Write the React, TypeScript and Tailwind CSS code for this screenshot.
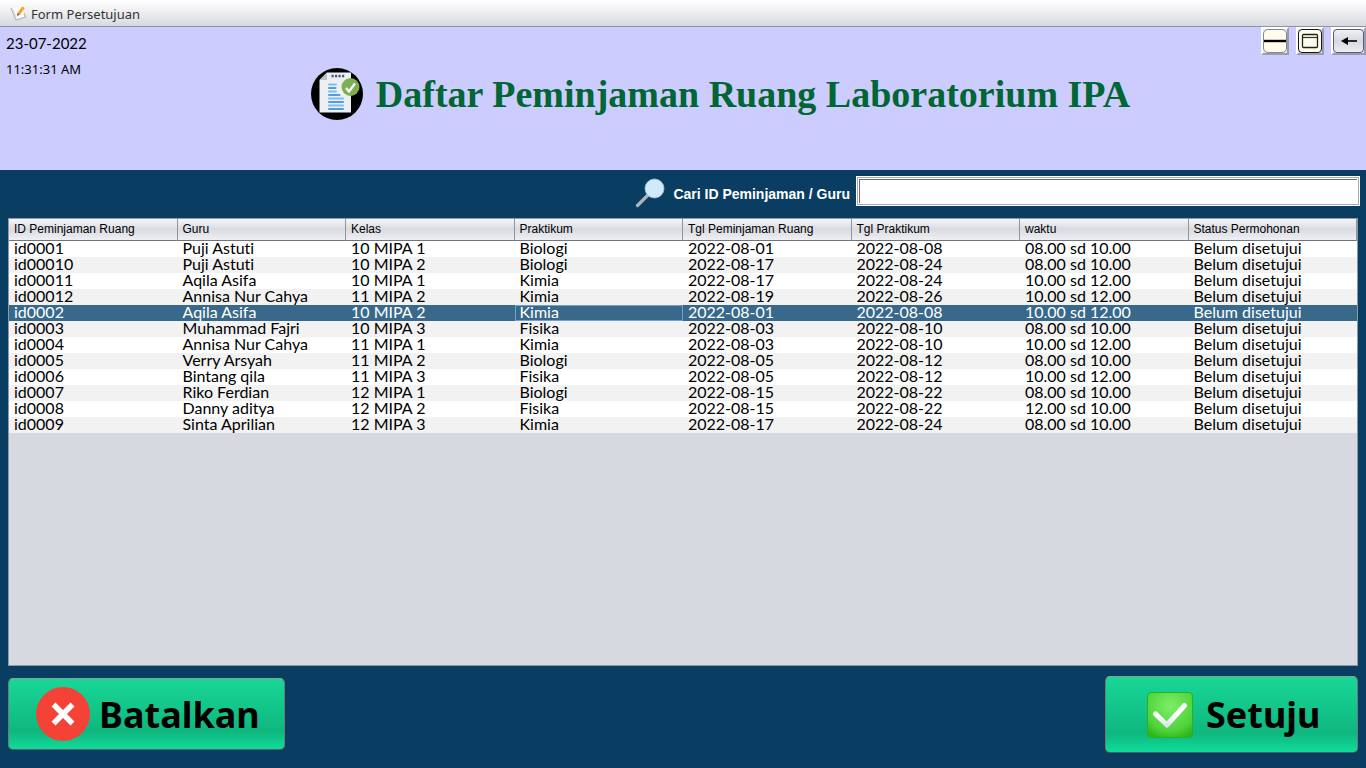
import { useState } from "react";

const columns = [
  "ID Peminjaman Ruang",
  "Guru",
  "Kelas",
  "Praktikum",
  "Tgl Peminjaman Ruang",
  "Tgl Praktikum",
  "waktu",
  "Status Permohonan",
];

const status = "Belum disetujui";

const rows = [
  ["id0001", "Puji Astuti", "10 MIPA 1", "Biologi", "2022-08-01", "2022-08-08", "08.00 sd 10.00", status],
  ["id00010", "Puji Astuti", "10 MIPA 2", "Biologi", "2022-08-17", "2022-08-24", "08.00 sd 10.00", status],
  ["id00011", "Aqila Asifa", "10 MIPA 1", "Kimia", "2022-08-17", "2022-08-24", "10.00 sd 12.00", status],
  ["id00012", "Annisa Nur Cahya", "11 MIPA 2", "Kimia", "2022-08-19", "2022-08-26", "10.00 sd 12.00", status],
  ["id0002", "Aqila Asifa", "10 MIPA 2", "Kimia", "2022-08-01", "2022-08-08", "10.00 sd 12.00", status],
  ["id0003", "Muhammad Fajri", "10 MIPA 3", "Fisika", "2022-08-03", "2022-08-10", "08.00 sd 10.00", status],
  ["id0004", "Annisa Nur Cahya", "11 MIPA 1", "Kimia", "2022-08-03", "2022-08-10", "10.00 sd 12.00", status],
  ["id0005", "Verry Arsyah", "11 MIPA 2", "Biologi", "2022-08-05", "2022-08-12", "08.00 sd 10.00", status],
  ["id0006", "Bintang qila", "11 MIPA 3", "Fisika", "2022-08-05", "2022-08-12", "10.00 sd 12.00", status],
  ["id0007", "Riko Ferdian", "12 MIPA 1", "Biologi", "2022-08-15", "2022-08-22", "08.00 sd 10.00", status],
  ["id0008", "Danny aditya", "12 MIPA 2", "Fisika", "2022-08-15", "2022-08-22", "12.00 sd 10.00", status],
  ["id0009", "Sinta Aprilian", "12 MIPA 3", "Kimia", "2022-08-17", "2022-08-24", "08.00 sd 10.00", status],
];

function TitleBar() {
  return (
    <div className="flex h-[27px] shrink-0 items-center gap-1 border-b border-[#8f929b] bg-linear-to-b from-white via-[#ededf0] to-[#d6d9df] pl-[10px]">
      <svg width="17" height="17" viewBox="0 0 17 17" aria-hidden="true">
        <path d="M1 3 L11 1.5 L15.5 12 L6 15.5 Z" fill="#fbfbfb" />
        <path d="M1 3 L6 15 L15.5 12 L14 8" fill="none" stroke="#b4b6ba" strokeWidth="1.2" />
        <path d="M3 4 L6.5 13" stroke="#dcdde0" strokeWidth="1" />
        <path d="M12.2 1.5 L14.8 3 L10 9.6 L7.4 8.1 Z" fill="#f5a32b" />
        <path d="M7.4 8.1 L10 9.6 L7 11 Z" fill="#6c5a48" />
      </svg>
      <span className="pt-px text-[13px] leading-5 text-[#333]">Form Persetujuan</span>
    </div>
  );
}

function DocumentLogo() {
  return (
    <svg width="52" height="52" viewBox="0 0 52 52" aria-hidden="true">
      <circle cx="26" cy="26" r="26" fill="#000" />
      <path d="M16 4.500 H40 V44.500 H8.500 V12 Z" fill="#ecf0f1" />
      <path d="M16 4.500 V12 H8.500 Z" fill="#bdc3c7" />
      <g fill="#4a5a6c">
        <rect x="20.500" y="6.800" width="2.200" height="2.500" />
        <rect x="24" y="6.800" width="2.200" height="2.500" />
        <rect x="27.500" y="6.800" width="2.200" height="2.500" />
        <rect x="31" y="6.800" width="2.200" height="2.500" />
      </g>
      <g strokeWidth="2" strokeLinecap="round">
        <path d="M18 16.500 H25 M18 23.500 H25 M18 30.500 H32 M18 37.500 H32" stroke="#7dbcf5" />
        <path d="M18 20 H24.500 M18 27 H28.500 M18 34 H32 M18 41 H32" stroke="#4f9fe0" />
      </g>
      <circle cx="39.500" cy="19" r="9" fill="#7cb052" />
      <path d="M35 20 L38 23.500 L44 15.500" fill="none" stroke="#fff" strokeWidth="2.200" />
    </svg>
  );
}

function WindowButtons() {
  const frame =
    "flex h-7 items-center justify-center border-2 border-t-white border-l-white border-r-[#9b9bb5] border-b-[#9b9bb5] bg-[#e6e6f6]";
  return (
    <div className="flex gap-[7px]">
      <button type="button" aria-label="Minimize" className={`${frame} w-7`}>
        <span className="flex h-6 w-6 items-center justify-center rounded-[5px] border border-[#7d8990] bg-[#fffdea]">
          <svg width="22" height="22" viewBox="0 0 22 22" aria-hidden="true">
            <path d="M0 11 H22" stroke="#000" strokeWidth="2.400" />
          </svg>
        </span>
      </button>
      <button type="button" aria-label="Maximize" className={`${frame} w-7`}>
        <span className="flex h-6 w-6 items-center justify-center rounded-[4px] border border-[#16181c] bg-[#fffdea]">
          <svg width="18" height="16" viewBox="0 0 18 16" fill="none" aria-hidden="true">
            <rect x="1.500" y="1.500" width="15" height="13" rx="1" stroke="#222" strokeWidth="1.300" />
            <path d="M2 4.500 H16" stroke="#333" strokeWidth="1.200" />
          </svg>
        </span>
      </button>
      <button type="button" aria-label="Kembali" className={`${frame} w-[35px]`}>
        <span className="flex h-6 w-8 items-center justify-center rounded-[4px] border border-[#5d6068] bg-linear-to-b from-[#f0f1f4] via-[#d5d8df] to-[#eceef2]">
          <svg width="16" height="10" viewBox="0 0 16 10" aria-hidden="true">
            <path d="M0 5 L7 1 V9 Z" fill="#000" />
            <path d="M5 5 H16" stroke="#000" strokeWidth="1.600" />
          </svg>
        </span>
      </button>
    </div>
  );
}

function Header() {
  return (
    <header className="relative h-[143px] shrink-0 bg-[#ccccff]">
      <div className="flex items-start justify-between pl-[6px]">
        <div className="flex flex-col pt-[3px] leading-[26px] text-black">
          <span className="font-['Lato',sans-serif] text-[15px]">23-07-2022</span>
          <span className="text-[13px]">11:31:31 AM</span>
        </div>
        <WindowButtons />
      </div>
      <div className="absolute inset-x-0 top-[41px] flex items-center justify-center gap-[13px] pl-[75px]">
        <DocumentLogo />
        <h1 className="font-['Liberation_Serif',serif] text-[38px] leading-[52px] font-bold whitespace-nowrap text-[#006633]">
          Daftar Peminjaman Ruang Laboratorium IPA
        </h1>
      </div>
    </header>
  );
}

function SearchBar() {
  return (
    <div className="flex h-12 shrink-0 items-center justify-end pr-[6px] pb-[6px]">
      <svg className="mt-1 mr-2" width="30" height="30" viewBox="0 0 30 30" aria-hidden="true">
        <path d="M2.500 27.500 L13 17" stroke="#aeb5bd" strokeWidth="3.200" strokeLinecap="round" />
        <circle cx="19.500" cy="10.500" r="9.500" fill="#cfeafc" stroke="#a9c1d0" strokeWidth="0.800" />
      </svg>
      <label htmlFor="cari" className="mt-[6px] mr-[6px] font-['Liberation_Sans',sans-serif] text-[14px] leading-5 font-bold text-white">
        Cari ID Peminjaman / Guru
      </label>
      <span className="flex h-[30px] w-[504px] border border-white bg-white">
        <span className="flex w-full border border-[#a8a8a8] bg-white p-px">
          <input
            id="cari"
            type="text"
            className="w-full border-t border-l border-[#6e6a6a] bg-white px-1 text-[14px] outline-none"
          />
        </span>
      </span>
    </div>
  );
}

function BookingTable() {
  const [selected, setSelected] = useState(4);
  return (
    <div className="min-h-0 flex-1 overflow-auto border border-[#9297a1] bg-[#d6d9df]">
      <table className="w-full table-fixed border-separate border-spacing-0">
        <thead>
          <tr>
            {columns.map((name) => (
              <th
                key={name}
                scope="col"
                className="h-[22px] border-r border-b border-r-[#8f949e] border-b-[#6f747f] bg-linear-to-b from-[#f5f5f8] via-[#d9dbe1] to-[#eef0f4] p-0 pl-[5px] text-left font-['Liberation_Sans',sans-serif] text-[12px] leading-[21px] font-normal whitespace-nowrap text-black"
              >
                {name}
              </th>
            ))}
          </tr>
        </thead>
        <tbody>
          {rows.map((row, index) => (
            <tr
              key={row[0]}
              onClick={() => setSelected(index)}
              className={index === selected ? "bg-[#39698a] text-white" : "bg-white text-black even:bg-[#f2f2f2]"}
            >
              {row.map((value, col) => (
                <td
                  key={columns[col]}
                  className={
                    index === selected && col === 3
                      ? "h-4 p-0 pb-[2px] pl-[5px] font-['Lato',sans-serif] text-[16px] leading-[14px] whitespace-nowrap [font-variant-ligatures:none] outline-1 -outline-offset-1 outline-[#6f9fd8]"
                      : "h-4 p-0 pb-[2px] pl-[5px] font-['Lato',sans-serif] text-[16px] leading-[14px] whitespace-nowrap [font-variant-ligatures:none]"
                  }
                >
                  {value}
                </td>
              ))}
            </tr>
          ))}
        </tbody>
      </table>
    </div>
  );
}

const actionStyle =
  "flex items-center rounded-[5px] border border-t-[#8aa097] border-r-[#6c7a78] border-b-[#4f5f63] border-l-[#6c7a78] bg-linear-to-b from-[#18d797] via-[#0fb77f] via-75% to-[#10dc9a] text-[36px] leading-[48px] font-bold text-black";

function Actions() {
  return (
    <footer className="flex shrink-0 items-start justify-between px-2 pt-[10px] pb-[15px]">
      <button type="button" className={`${actionStyle} mt-[2px] h-[72px] w-[277px] gap-[9px] pl-[27px]`}>
        <svg width="54" height="54" viewBox="0 0 54 54" aria-hidden="true">
          <circle cx="27" cy="27" r="27" fill="#f44336" />
          <path d="M17.500 17.500 L36.500 36.500 M36.500 17.500 L17.500 36.500" stroke="#fff" strokeWidth="5.500" />
        </svg>
        <span className="pt-[2px]">Batalkan</span>
      </button>
      <button type="button" className={`${actionStyle} h-[77px] w-[253px] gap-[13px] pl-[41px]`}>
        <svg width="46" height="46" viewBox="0 0 46 46" aria-hidden="true">
          <defs>
            <radialGradient id="tile" cx="0.5" cy="0.3" r="0.75">
              <stop offset="0" stopColor="#7cef68" />
              <stop offset="0.75" stopColor="#4fd238" />
              <stop offset="1" stopColor="#2fb51f" />
            </radialGradient>
            <linearGradient id="tick" x1="0" y1="0" x2="0" y2="1">
              <stop offset="0.5" stopColor="#fff" />
              <stop offset="1" stopColor="#dfe3ea" />
            </linearGradient>
          </defs>
          <rect x="0.500" y="0.500" width="45" height="45" rx="3.500" fill="url(#tile)" stroke="#27b31c" />
          <path d="M8.500 22 L20 33 L37.500 13.500" fill="none" stroke="url(#tick)" strokeWidth="5" strokeLinecap="round" strokeLinejoin="round" />
        </svg>
        <span>Setuju</span>
      </button>
    </footer>
  );
}

export default function App() {
  return (
    <div className="flex h-screen min-h-[480px] flex-col bg-[#0a3d62] font-['Noto_Sans',sans-serif]">
      <TitleBar />
      <Header />
      <SearchBar />
      <main className="flex min-h-0 flex-1 flex-col px-2">
        <BookingTable />
      </main>
      <Actions />
    </div>
  );
}
